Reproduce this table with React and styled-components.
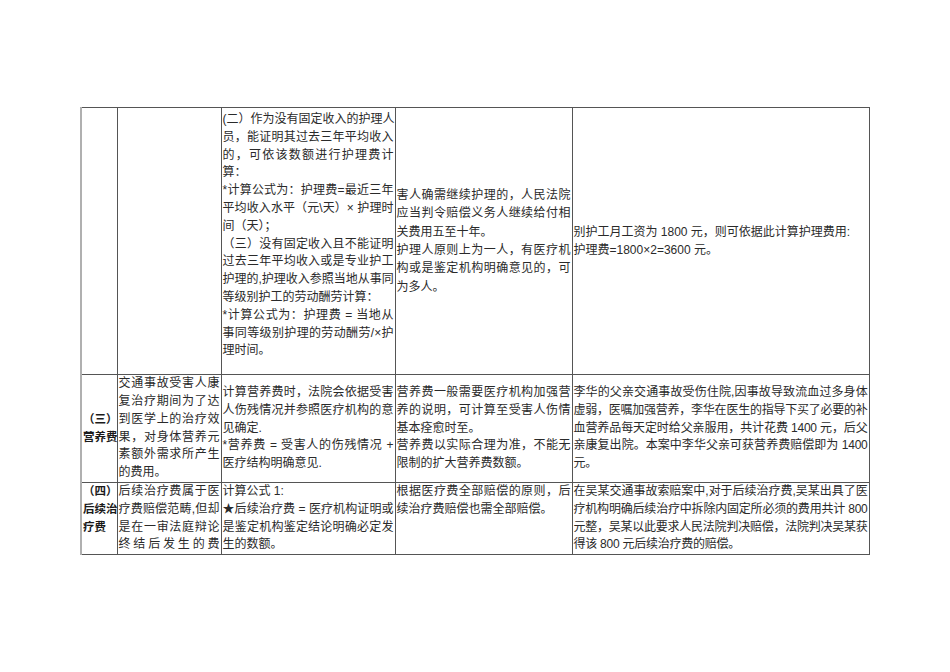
import React from 'react';
import styled, { createGlobalStyle } from 'styled-components';

const GlobalStyle = createGlobalStyle`
  html, body {
    margin: 0;
    padding: 0;
    background: #ffffff;
  }
  body {
    font-family: "Liberation Sans", "Noto Sans CJK SC", sans-serif;
    color: #2a2a2a;
  }
`;

const Page = styled.div`
  width: 950px;
  min-height: 672px;
  padding: 107px 0 0 80px;
  box-sizing: border-box;
`;

const Table = styled.table`
  border-collapse: collapse;
  table-layout: fixed;
  width: 788px;
`;

const Col = styled.col`
  width: ${(p) => p.$w}px;
`;

const Row = styled.tr`
  height: ${(p) => p.$h}px;
`;

const Cell = styled.td`
  border: 1px solid #555;
  border-left: ${(p) => (p.$first ? '2px solid #b0b0b0' : '1px solid #555')};
  vertical-align: ${(p) => p.$valign || 'middle'};
  padding: ${(p) => p.$padTop || 0}px 1px 0 1px;
  font-size: 12px;
  line-height: ${(p) => p.$lh || 17.8}px;
  letter-spacing: ${(p) => (p.$tight ? '-0.25px' : 'normal')};
  color: #2a2a2a;
`;

const Label = styled.div`
  font-weight: bold;
  font-size: 11.5px;
  white-space: nowrap;
  color: #1a1a1a;
`;

const Line = styled.div`
  white-space: nowrap;
  text-align: ${(p) => (p.$full ? 'justify' : 'left')};
  text-align-last: ${(p) => (p.$full ? 'justify' : 'left')};
`;

const Paragraph = ({ lines, open }) => (
  <div>
    {lines.map((text, i) => (
      <Line key={i} $full={open || i < lines.length - 1}>
        {text}
      </Line>
    ))}
  </div>
);

const widths = [36, 104, 174, 177, 297];

const rows = [
  {
    h: 267,
    cells: [
      null,
      null,
      {
        valign: 'top',
        padTop: 3,
        paras: [
          { lines: ['(二）作为没有固定收入的护理人', '员，能证明其过去三年平均收入', '的，可依该数额进行护理费计', '算：'] },
          { lines: ['*计算公式为：护理费=最近三年', '平均收入水平（元\\天）× 护理时', '间（天）；'] },
          { lines: ['（三）没有固定收入且不能证明', '过去三年平均收入或是专业护工', '护理的,护理收入参照当地从事同', '等级别护工的劳动酬劳计算：'] },
          { lines: ['*计算公式为：护理费 = 当地从', '事同等级别护理的劳动酬劳/×护', '理时间。'] },
        ],
      },
      {
        lh: 18.3,
        paras: [
          { lines: ['害人确需继续护理的，人民法院', '应当判令赔偿义务人继续给付相', '关费用五至十年。'] },
          { lines: ['护理人原则上为一人，有医疗机', '构或是鉴定机构明确意见的，可', '为多人。'] },
        ],
      },
      {
        lh: 18.3,
        paras: [
          { lines: ['别护工月工资为 1800 元，则可依据此计算护理费用:'] },
          { lines: ['护理费=1800×2=3600 元。'] },
        ],
      },
    ],
  },
  {
    h: 108,
    label: ['（三）', '营养费'],
    cells: [
      {
        paras: [
          { lines: ['交通事故受害人康', '复治疗期间为了达', '到医学上的治疗效', '果，对身体营养元', '素额外需求所产生', '的费用。'] },
        ],
      },
      {
        paras: [
          { lines: ['计算营养费时，法院会依据受害', '人伤残情况并参照医疗机构的意', '见确定.'] },
          { lines: ['*营养费 = 受害人的伤残情况 +', '医疗结构明确意见.'] },
        ],
      },
      {
        paras: [
          { lines: ['营养费一般需要医疗机构加强营', '养的说明，可计算至受害人伤情', '基本痊愈时至。'] },
          { lines: ['营养费以实际合理为准，不能无', '限制的扩大营养费数额。'] },
        ],
      },
      {
        tight: true,
        paras: [
          {
            lines: [
              '李华的父亲交通事故受伤住院,因事故导致流血过多身体',
              '虚弱，医嘱加强营养，李华在医生的指导下买了必要的补',
              '血营养品每天定时给父亲服用，共计花费 1400 元，后父',
              '亲康复出院。本案中李华父亲可获营养费赔偿即为 1400',
              '元。',
            ],
          },
        ],
      },
    ],
  },
  {
    h: 71,
    valign: 'top',
    label: ['（四）', '后续治', '疗费'],
    cells: [
      {
        paras: [{ lines: ['后续治疗费属于医', '疗费赔偿范畴,但却', '是在一审法庭辩论', '终结后发生的费'], open: true }],
      },
      {
        paras: [
          { lines: ['计算公式 1:'] },
          { lines: ['★后续治疗费 = 医疗机构证明或', '是鉴定机构鉴定结论明确必定发', '生的数额。'] },
        ],
      },
      {
        paras: [{ lines: ['根据医疗费全部赔偿的原则，后', '续治疗费赔偿也需全部赔偿。'] }],
      },
      {
        tight: true,
        paras: [
          {
            lines: [
              '在吴某交通事故索赔案中,对于后续治疗费,吴某出具了医',
              '疗机构明确后续治疗中拆除内固定所必须的费用共计 800',
              '元整，吴某以此要求人民法院判决赔偿，法院判决吴某获',
              '得该 800 元后续治疗费的赔偿。',
            ],
          },
        ],
      },
    ],
  },
];

export default function App() {
  return (
    <Page>
      <GlobalStyle />
      <Table>
        <colgroup>
          {widths.map((w, i) => (
            <Col key={i} $w={w} />
          ))}
        </colgroup>
        <tbody>
          {rows.map((row, ri) => {
            const cells = row.label ? [{ label: row.label }, ...row.cells] : row.cells;
            return (
              <Row key={ri} $h={row.h}>
                {cells.map((cell, ci) => (
                  <Cell
                    key={ci}
                    $first={ci === 0}
                    $valign={(cell && cell.valign) || row.valign}
                    $padTop={cell && cell.padTop}
                    $lh={cell && cell.lh}
                    $tight={cell && cell.tight}
                  >
                    {cell && cell.label &&
                      cell.label.map((t, i) => <Label key={i}>{t}</Label>)}
                    {cell && cell.paras &&
                      cell.paras.map((p, pi) => <Paragraph key={pi} {...p} />)}
                  </Cell>
                ))}
              </Row>
            );
          })}
        </tbody>
      </Table>
    </Page>
  );
}
